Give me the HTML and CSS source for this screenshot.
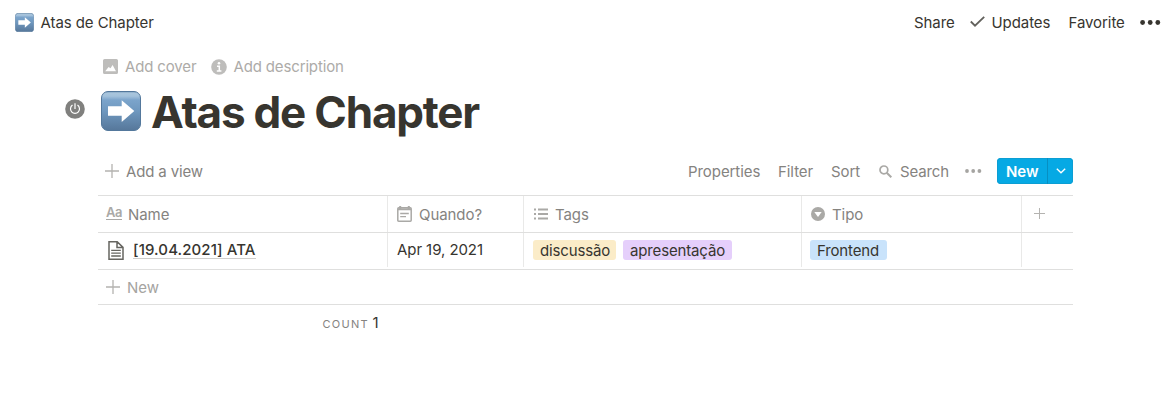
FILE: index.html
```html
<!DOCTYPE html>
<html lang="en">
<head>
<meta charset="utf-8">
<title>Atas de Chapter</title>
<link rel="stylesheet" href="styles.css">
</head>
<body>
<svg class="defs" width="0" height="0" aria-hidden="true">
  <defs>
    <linearGradient id="blue" x1="0" y1="0" x2="0" y2="1">
      <stop offset="0" stop-color="#7398b8"/><stop offset=".04" stop-color="#a9c5dc"/><stop offset=".12" stop-color="#a3c1db"/><stop offset=".22" stop-color="#7ba4cb"/><stop offset=".5" stop-color="#6f98bf"/><stop offset="1" stop-color="#56779a"/>
    </linearGradient>
    <symbol id="arrow" viewBox="0 0 40 40">
      <rect x=".5" y=".5" width="39" height="39" rx="6.5" fill="url(#blue)" stroke="#53789c"/>
      <path d="M7 15.3h13.7V9.2L33.3 20 20.7 31v-6.2H7z" fill="#fff"/>
    </symbol>
    <symbol id="plus" viewBox="0 0 14 14"><path d="M7 0v14M0 7h14" stroke="currentColor" stroke-width="1.3"/></symbol>
  </defs>
</svg>
<header class="topbar">
  <svg class="crumb-icon"><use href="#arrow"/></svg>
  <span class="crumb">Atas de Chapter</span>
  <nav class="actions">
    <span class="share">Share</span>
    <svg class="check" viewBox="0 0 15 11"><path d="M.8 5.5 5 9.7 14.2.8" fill="none" stroke="#62615c" stroke-width="1.8"/></svg>
    <span class="updates">Updates</span>
    <span class="favorite">Favorite</span>
    <svg class="more" viewBox="0 0 21 5" fill="#37352f"><circle cx="2.6" cy="2.5" r="2.4"/><circle cx="10.2" cy="2.5" r="2.4"/><circle cx="17.8" cy="2.5" r="2.4"/></svg>
  </nav>
</header>
<main class="page">
  <div class="controls">
    <svg class="cover-icon" viewBox="0 0 15 15"><path fill="#bebdbb" fill-rule="evenodd" d="M1.6 0h11.8Q15 0 15 1.6v11.8q0 1.6-1.6 1.6H1.6Q0 15 0 13.4V1.6Q0 0 1.6 0zM2.2 12.3h10.8L9.6 6 7.5 9.2 5.6 8z"/></svg>
    <span class="cover">Add cover</span>
    <svg class="info-icon" viewBox="0 0 16 16"><circle cx="8" cy="8" r="7.8" fill="#bebdbb"/><circle cx="8" cy="4.2" r="1.3" fill="#fff"/><path d="M6 7.2h2.3v4.6M5.8 12h4.6" fill="none" stroke="#fff" stroke-width="1.5"/></svg>
    <span class="description">Add description</span>
  </div>
  <div class="heading">
    <svg class="power" viewBox="0 0 20 20"><circle cx="10" cy="10" r="9.8" fill="#80807e"/><path d="M7.5 6.1a4.5 4.5 0 1 0 5 0M10 4.3v5.6" fill="none" stroke="#fff" stroke-width="1.2"/></svg>
    <svg class="title-icon"><use href="#arrow"/></svg>
    <h1 class="title">Atas de Chapter</h1>
  </div>
  <div class="viewbar">
    <svg class="plus"><use href="#plus"/></svg>
    <span class="add-view">Add a view</span>
    <span class="properties">Properties</span>
    <span class="filter">Filter</span>
    <span class="sort">Sort</span>
    <svg class="search-icon" viewBox="0 0 13 13"><circle cx="4.9" cy="4.9" r="3.9" fill="none" stroke="#aaa9a6" stroke-width="1.7"/><path d="m7.7 7.7 4.6 4.6" stroke="#aaa9a6" stroke-width="2"/></svg>
    <span class="search">Search</span>
    <svg class="dots" viewBox="0 0 17 4" fill="#a5a4a1"><circle cx="2" cy="2" r="1.9"/><circle cx="8.2" cy="2" r="1.9"/><circle cx="14.4" cy="2" r="1.9"/></svg>
    <div class="new-button"><span class="new-label">New</span><span class="new-menu"><svg class="chevron" viewBox="0 0 10 6"><path d="m.8.8 4.2 4 4.2-4" fill="none" stroke="#fff" stroke-width="1.4"/></svg></span></div>
  </div>
  <section class="table">
    <div class="row head">
      <div class="cell"><span class="aa">Aa</span><span class="h-name">Name</span></div>
      <div class="cell"><svg class="date-icon" viewBox="0 0 15 16"><path d="M1.7 1.8h11.6q.9 0 .9.9v11.6q0 .9-.9.9H1.7q-.9 0-.9-.9V2.7q0-.9.9-.9z" fill="none" stroke="#aaa9a6" stroke-width="1.5"/><path d="M1 3.2h13M3.2 0v3M11.8 0v3" stroke="#aaa9a6" stroke-width="2"/><path d="M3.2 7.5h8.6M3.2 10.6h5.8" stroke="#aaa9a6" stroke-width="1.3"/></svg><span class="h-when">Quando?</span></div>
      <div class="cell"><svg class="list-icon" viewBox="0 0 14 12"><path d="M0 1.4h2M0 6h2M0 10.6h2M4 1.4h10M4 6h10M4 10.6h10" stroke="#aaa9a6" stroke-width="2"/></svg><span class="h-tags">Tags</span></div>
      <div class="cell"><svg class="select-icon" viewBox="0 0 14 14"><circle cx="7" cy="7" r="7" fill="#aaa9a6"/><path d="M3.3 5h7.4L7 10z" fill="#fff"/></svg><span class="h-type">Tipo</span></div>
      <div class="cell last"><svg class="plus small"><use href="#plus"/></svg></div>
    </div>
    <div class="row body">
      <div class="cell"><svg class="doc-icon" viewBox="0 0 16 19"><path d="M1 .8h8.2L15 6.4v11.8H1zM9 .8v5.8h6" fill="none" stroke="#666560" stroke-width="1.5"/><path d="M3.2 9.4h9.6M3.2 12.2h9.6M3.2 15h9.6" stroke="#666560" stroke-width="1.3"/></svg><span class="name">[19.04.2021] ATA</span></div>
      <div class="cell"><span class="date">Apr 19, 2021</span></div>
      <div class="cell"><span class="tag yellow">discussão</span><span class="tag purple">apresentação</span></div>
      <div class="cell type"><span class="tag blue">Frontend</span></div>
      <div class="cell last"></div>
    </div>
    <div class="add-row"><svg class="plus"><use href="#plus"/></svg><span class="add-new">New</span></div>
    <div class="summary"><span class="count">COUNT</span><span class="number">1</span></div>
  </section>
</main>
</body>
</html>
```
FILE: styles.css
```css
* { box-sizing: border-box; }
body { margin: 0; background: #fff; color: #37352f; font: 15px/20px Inter, "Liberation Sans", sans-serif; letter-spacing: -0.07px; }
span, h1 { white-space: nowrap; }
svg { display: block; flex: none; }
.defs { position: absolute; }
.topbar { height: 45px; display: flex; align-items: center; padding-left: 15px; }
.crumb-icon { width: 19px; height: 19px; margin-right: 6.5px; }
.actions { margin-left: auto; width: 261px; display: flex; align-items: center; }
.share { width: 56px; }
.check { width: 15px; height: 11px; margin: 0 6.5px 2px 0; }
.updates { width: 77px; }
.favorite { width: 71.5px; }
.more { width: 21px; height: 5px; margin-bottom: 1px; }
.page { width: 975px; margin-left: 98px; }
.controls { height: 43px; display: flex; align-items: center; padding-left: 5px; color: #adaba8; letter-spacing: -0.15px; }
.cover-icon { width: 15px; height: 15px; margin-right: 7px; }
.cover { width: 86px; }
.info-icon { width: 16px; height: 16px; margin-right: 6.5px; }
.heading { height: 46px; display: flex; align-items: center; margin-left: -33px; }
.power { width: 20px; height: 20px; margin-right: 16px; margin-bottom: 4px; }
.title-icon { width: 40px; height: 40px; margin-right: 10px; }
.title { margin: 2px 0 0; font-size: 44px; line-height: 46px; font-weight: 700; letter-spacing: -1.2px; }
.viewbar { height: 61px; display: flex; align-items: center; padding: 24px 0 11px 7px; color: #85837f; }
.viewbar > span { padding-top: 2px; }
.plus { width: 14px; height: 14px; color: #b4b3b0; margin-right: 7px; }
.add-view { margin-right: auto; letter-spacing: -0.15px; }
.properties { width: 90px; }
.filter { width: 53px; }
.sort { width: 48px; }
.search-icon { width: 13px; height: 13px; margin-right: 8px; }
.search { width: 64.5px; letter-spacing: -0.15px; }
.dots { width: 17px; height: 4px; margin-right: 15.5px; }
.new-button { width: 76px; height: 26px; display: flex; border-radius: 4px; background: #06a9e4; box-shadow: inset 0 0 0 1px #0c9ed3; color: #fff; font-weight: 600; line-height: 27px; }
.new-label { width: 51px; padding-left: 9px; border-right: 1px solid #078fc2; }
.new-menu { flex: 1; display: flex; align-items: center; justify-content: center; }
.chevron { width: 10px; height: 6px; }
.table { border-top: 1px solid #dfdfde; }
.row { display: grid; grid-template-columns: 290px 136px 278px 220px 51px; border-bottom: 1px solid #dfdfde; }
.head { height: 37px; color: #85837f; }
.body { height: 37px; padding-bottom: 2px; }
.cell { display: flex; align-items: center; border-right: 1px solid #e9e9e8; padding-left: 9px; }
.head .cell { padding-top: 1px; }
.last { border-right: 0; padding-left: 12px; }
.cell:first-child { padding-left: 8px; }
.aa { width: 16px; height: 13px; margin: 0 6px 2px 0; border-bottom: 1px solid #aaa9a6; color: #aaa9a6; font-size: 13px; line-height: 11px; font-weight: 600; letter-spacing: -0.5px; }
.date-icon { width: 15px; height: 16px; margin: 0 7px 2px 0; }
.list-icon { width: 14px; height: 12px; margin: 0 7px 2px 1px; }
.select-icon { width: 14px; height: 14px; margin: 0 7px 2px 0; }
.small { width: 11px; height: 11px; margin-bottom: 2px; }
.doc-icon { width: 16px; height: 19px; margin: 0 9px 0 2px; }
.name { font-weight: 500; line-height: 17px; border-bottom: 1px solid #cfcecc; letter-spacing: .1px; margin-bottom: 1px; }
.tag { height: 20px; line-height: 21px; border-radius: 3px; padding-left: 7px; letter-spacing: -0.15px; }
.yellow { width: 83px; background: #fbecc8; margin-right: 7px; }
.purple { width: 109px; background: #e5cffb; }
.type { padding-left: 8px; }
.blue { width: 77px; background: #c9e3fb; }
.add-row { height: 35px; display: flex; align-items: center; padding-left: 8px; border-bottom: 1px solid #dfdfde; color: #a5a4a1; }
.add-new { padding-top: 2px; }
.summary { height: 36px; display: flex; align-items: center; padding-left: 224.5px; }
.count { width: 50px; color: #85837f; font-size: 11px; letter-spacing: 1.3px; padding-top: 2px; }
```
